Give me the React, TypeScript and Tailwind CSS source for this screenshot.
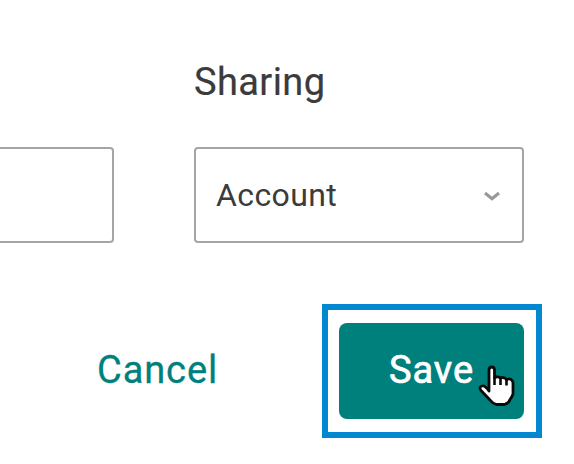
function ChevronIcon() {
  return (
    <svg width="20" height="14" viewBox="0 0 20 14" fill="none">
      <path d="M3 5L10 10.700L17 5" stroke="#999999" strokeWidth="3.200" />
    </svg>
  );
}

function HandCursor() {
  return (
    <svg width="38" height="43" viewBox="0 0 38 43">
      <path
        d="M11 26V5Q11 2 13.700 2Q16.500 2 16.500 5V13Q19 10.500 22.500 13Q26 11.500 28.500 14.500Q33.500 12.500 35 17.500V29Q34 32 32 34.500Q31 38 26.500 39.500H18.500Q14 38 12 35L3 25.500Q0.500 22 4 21Q7 20 11 26Z"
        fill="#ffffff"
        stroke="#0a0a0a"
        strokeWidth="2.800"
        strokeLinejoin="round"
      />
      <path d="M16.500 12V20M22.500 13V20M28.500 14.500V20.500" fill="none" stroke="#0a0a0a" strokeWidth="2.600" />
    </svg>
  );
}

export default function App() {
  return (
    <div className="h-[464px] w-[574px] overflow-hidden bg-white font-['Roboto',sans-serif] text-[#3b3b3b]">
      <div className="grid grid-cols-[114px_330px] gap-x-20 pt-[59px]">
        <div className="col-start-2 h-[88px] text-[38px] leading-[46px] tracking-[0.4px] [-webkit-text-stroke:0.2px]">
          Sharing
        </div>
        <div className="col-start-1 h-24 rounded-r-[4px] border-2 border-l-0 border-[#a5a5a5]" />
        <div className="flex h-24 items-center justify-between rounded-[4px] border-2 border-[#a5a5a5] pr-5 pl-5">
          <span className="text-[32px] leading-10 tracking-[0.4px]">Account</span>
          <ChevronIcon />
        </div>
      </div>
      <div className="mt-[61px] flex h-[134px] items-center pl-[97px]">
        <button className="w-[225px] pb-[2px] text-left text-[38px] leading-[46px] tracking-[0.9px] text-[#00807d] [-webkit-text-stroke:0.3px]">
          Cancel
        </button>
        <div className="h-[134px] w-[220px] border-[6px] border-[#0288d1] pt-[13px] pl-[11px]">
          <button className="relative h-24 w-[185px] rounded-lg bg-[#00807d] pb-[2px] text-[38px] tracking-[0.9px] text-white">
            <span className="[-webkit-text-stroke:0.7px]">Save</span>
            <span className="absolute top-[42px] left-[139px]">
              <HandCursor />
            </span>
          </button>
        </div>
      </div>
    </div>
  );
}
